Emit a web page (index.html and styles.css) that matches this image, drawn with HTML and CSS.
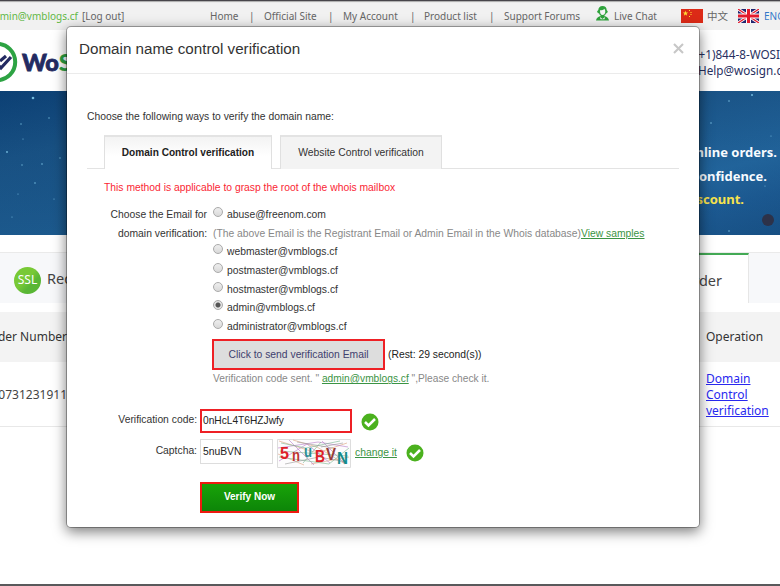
FILE: index.html
```html
<!DOCTYPE html>
<html lang="en">
<head>
<meta charset="utf-8">
<title>Domain name control verification</title>
<link rel="stylesheet" href="styles.css">
</head>
<body>
<div class="page">
  <div class="topbar">
    <div class="account"><span class="user">admin@vmblogs.cf</span> <span>[Log out]</span></div>
    <div class="nav">
      <span>Home</span><i>|</i><span>Official Site</span><i>|</i><span>My Account</span><i>|</i><span>Product list</span><i>|</i><span>Support Forums</span>
      <svg class="agent" width="13" height="15" viewBox="0 0 13 15"><path fill="#2fa33c" d="M6.500 0C3.800 0 2.400 1.700 2.300 4L1 5.500l1 1.800h1C3.500 8.800 4.200 9.500 5 9.900 2.300 10.500.4 11.500 0 14.500h13c-.4-3-2.300-4-5-4.600 1-.5 1.700-1.300 2-2.600h1l.8-1.700L10.700 4C10.600 1.500 9.200 0 6.500 0z"/><path fill="#f4f4f4" d="M4 4.200c2 0 3.500-.5 4.500-1.500L9.300 5c0 3-1.300 4-2.800 4S3.900 7.500 4 4.200zM4 11l2.500 2L9 11l-.5 2.300h-4z"/></svg>
      <span>Live Chat</span>
      <svg width="22" height="14" viewBox="0 0 22 14"><path fill="#dc2a17" d="M0 0h22v14H0z"/><path fill="#fd3" d="M4.500 1.800l.7 1.800h1.900L5.600 4.800l.6 1.900-1.700-1.100-1.700 1.100.6-1.900-1.500-1.200h1.900zM8 1h1v1H8zM9.500 3h1v1h-1zM9.500 5h1v1h-1zM8 7h1v1H8z"/></svg>
      <span class="cjk">中文</span>
      <svg width="21" height="14" viewBox="0 0 21 14"><path fill="#20246e" d="M0 0h21v14H0z"/><path stroke="#fff" stroke-width="3" d="M0 0l21 14M21 0L0 14"/><path stroke="#e31b2d" stroke-width="1.300" d="M0 0l21 14M21 0L0 14"/><path stroke="#fff" stroke-width="5" d="M10.500 0v14M0 7h21"/><path stroke="#e31b2d" stroke-width="3" d="M10.500 0v14M0 7h21"/></svg>
      <span class="lang">ENGLISH</span>
    </div>
  </div>
  <div class="brandbar">
    <svg class="mark" width="18" height="42" viewBox="0 0 18 42"><circle cx="-3" cy="21" r="18.200" fill="none" stroke="#2da343" stroke-width="4"/><path d="M-4 22l5 5L11 16M0 20l6-5" fill="none" stroke="#232a61" stroke-width="3.200"/></svg>
    <div class="brand">Wo<b>S</b></div>
    <div class="contact"><div>(+1)844-8-WOSIGN</div><div>Help@wosign.com</div></div>
  </div>
  <div class="banner">
    <svg class="stars" width="780" height="144" viewBox="0 0 780 144"><g fill="#73b9dc"><circle cx="33" cy="7" r="1.300"/><circle cx="21" cy="33" r=".7"/><circle cx="49" cy="27" r=".7"/><circle cx="7" cy="61" r=".9"/><circle cx="23" cy="48" r=".6"/><circle cx="22" cy="74" r=".7"/><circle cx="42" cy="73" r=".8"/><circle cx="60" cy="67" r=".7"/><circle cx="35" cy="92" r=".8"/><circle cx="18" cy="103" r=".6"/><circle cx="54" cy="108" r=".6"/><circle cx="12" cy="126" r=".6"/><circle cx="752" cy="4" r="1"/><circle cx="729" cy="10" r=".8"/><circle cx="711" cy="32" r=".8"/><circle cx="771" cy="45" r=".6"/><circle cx="721" cy="86" r=".8"/><circle cx="729" cy="140" r=".8"/><circle cx="765" cy="95" r=".6"/></g></svg>
    <div class="slogan"><div>online orders.</div><div>confidence.</div><div class="gold">discount.</div></div>
    <div class="dot"></div>
  </div>
  <div class="tabs">
    <div class="ssl"><span class="badge">SSL</span><span class="request">Request</span></div>
    <div class="order">Order</div>
  </div>
  <div class="thead"><span class="c1">Order Number</span><span class="c2">Operation</span></div>
  <div class="trow"><span class="c1">160731231911</span><a class="c2">Domain<br>Control<br>verification</a></div>
</div>

<div class="modal">
  <div class="mhead"><span class="title">Domain name control verification</span>
    <svg width="11" height="11" viewBox="0 0 11 11"><path d="M1 1l9 9M10 1l-9 9" stroke="#c7c7c7" stroke-width="2.100"/></svg></div>
  <div class="intro">Choose the following ways to verify the domain name:</div>
  <div class="mtabs"><div class="mt on">Domain Control verification</div><div class="mt off">Website Control verification</div></div>
  <div class="warn">This method is applicable to grasp the root of the whois mailbox</div>
  <div class="emails">
    <div class="label"><div>Choose the Email for</div><div>domain verification:</div></div>
    <div class="list">
      <div class="opt"><i></i>abuse@freenom.com</div>
      <div class="opt note">(The above Email is the Registrant Email or Admin Email in the Whois database)<a>View samples</a></div>
      <div class="opt"><i></i>webmaster@vmblogs.cf</div>
      <div class="opt"><i></i>postmaster@vmblogs.cf</div>
      <div class="opt"><i></i>hostmaster@vmblogs.cf</div>
      <div class="opt"><i class="sel"></i>admin@vmblogs.cf</div>
      <div class="opt"><i></i>administrator@vmblogs.cf</div>
    </div>
  </div>
  <div class="send"><div class="sendbtn">Click to send verification Email</div><span>(Rest: 29 second(s))</span></div>
  <div class="sent">Verification code sent. " <a>admin@vmblogs.cf</a> ",Please check it.</div>
  <div class="code"><div class="lab">Verification code:</div><div class="in red">0nHcL4T6HZJwfy</div>
    <svg class="ok" width="18" height="18" viewBox="0 0 18 18"><circle cx="9" cy="9" r="8.500" fill="#4bb11e"/><path d="M4 9l3.500 3.500L14 6" fill="none" stroke="#fff" stroke-width="2.500"/></svg></div>
  <div class="captcha"><div class="lab">Captcha:</div><div class="in small">5nuBVN</div>
    <svg class="cap" width="74" height="29" viewBox="0 0 74 29"><path fill="#fdfcfd" stroke="#ddd" d="M.5.500h73v28H.5z"/><g fill="none" stroke-width=".6"><path stroke="#dc9f7a" d="M2 2l38 12 30-10M1 15l26 11M16 1l24 7 28 17M34 25l38-7"/><path stroke="#b77bc9" d="M1 9l40-6 30 5M2 22l28-17 23 19M12 1l25 25M45 2l22 22"/><path stroke="#79b591" d="M4 4l25 5 34-7M2 18l50 7 20-16M26 24l18-21M3 12l68 5"/><path stroke="#999" d="M20 3l36 6M8 25l34-7 27 5M44 8l22-4"/></g><g class="glyphs"><text x="3" y="20" fill="#e02029" textLength="9" lengthAdjust="spacingAndGlyphs">5</text><text x="15" y="22" fill="#bd3430" textLength="8" lengthAdjust="spacingAndGlyphs">n</text><text x="27" y="18" fill="#2a8c94" textLength="8" lengthAdjust="spacingAndGlyphs">u</text><text x="38" y="23" fill="#dd2027" textLength="10" lengthAdjust="spacingAndGlyphs">B</text><text x="49" y="21" fill="#963d38" textLength="10" lengthAdjust="spacingAndGlyphs">V</text><text x="60" y="25" fill="#168b8b" textLength="11" lengthAdjust="spacingAndGlyphs">N</text></g></svg>
    <a>change it</a>
    <svg class="ok" width="18" height="18" viewBox="0 0 18 18"><circle cx="9" cy="9" r="8.500" fill="#4bb11e"/><path d="M4 9l3.500 3.500L14 6" fill="none" stroke="#fff" stroke-width="2.500"/></svg></div>
  <div class="verify">Verify Now</div>
</div>
</body>
</html>
```
FILE: styles.css
```css
* { box-sizing: border-box; }
body { margin: 0; width: 780px; height: 586px; overflow: hidden; position: relative; background: #fff; font-family: "Noto Sans", "Noto Sans CJK SC", sans-serif; white-space: nowrap; }
i { font-style: normal; }
svg { display: block; flex: none; }
.page { width: 780px; height: 586px; overflow: hidden; display: flex; flex-direction: column; border-top: 1px solid #47454a; border-bottom: 2px solid #59595b; }
.page > div { flex: none; }
.topbar { height: 29px; background: #f1f1f1; display: flex; align-items: center; color: #666; font-size: 10px; line-height: 28px; box-shadow: inset 0 2px 1px -1px #aaa; }
.account { width: 222px; flex: none; display: flex; gap: 4px; margin-left: -12px; }
.account span { flex: none; }
.user { color: #62b846; }
.nav { flex: none; display: grid; grid-template-columns: 39px 15px 64px 15px 67px 14px 65px 15px 92px 18px 67px 26px 31px 26px 60px; align-items: center; height: 29px; }
.agent { margin-top: -4px; }
.cjk { font-family: "Noto Sans CJK SC", sans-serif; font-size: 10.500px; }
.lang { color: #3479c9; }
.brandbar { height: 61px; display: flex; align-items: flex-start; }
.mark { margin-top: 11px; }
.brand { flex: none; width: 79px; margin: 16px 0 0 4px; font: 900 23.500px/32px Lato, sans-serif; color: #232a61; -webkit-text-stroke: .8px #232a61; }
.brand b { color: #2da343; font-weight: 900; -webkit-text-stroke: 0; }
.contact { flex: none; margin: 16px 0 0 594px; color: #27305f; font-size: 11.700px; line-height: 16px; }
.contact div:last-child { margin-left: 3px; }
.banner { height: 144px; position: relative; display: flex; justify-content: flex-end; background: linear-gradient(rgba(0,20,60,.12), rgba(0,20,60,0)), linear-gradient(165deg, #0e467c 0%, #1a5588 20%, #1c5a8e 50%, #2368a0 77%, #1c5a92 88%, #174f83 100%); }
.stars { position: absolute; left: 0; top: 0; }
.slogan { position: relative; width: 97px; padding-top: 50px; color: #f7fbff; font-weight: bold; font-size: 13px; line-height: 23.500px; }
.slogan div { width: 94px; text-align: right; }
.slogan div:nth-child(2) { width: 84px; }
.slogan .gold { width: 61px; color: #f7e34d; }
.dot { position: absolute; left: 762px; top: 123px; width: 12px; height: 12px; border-radius: 50%; background: #2d3249; }
.tabs { margin-top: 17px; height: 51px; display: flex; background: #f7f8fa; border-top: 1px solid #eaeaea; color: #444; font-size: 14.500px; line-height: 56px; }
.ssl { width: 600px; display: flex; align-items: center; gap: 6px; padding-left: 14px; }
.badge { width: 27px; height: 27px; margin-top: 5px; border-radius: 50%; background: linear-gradient(135deg, #78c936 45%, #59b635 65%); color: #fff; font-size: 12px; line-height: 25px; text-align: center; }
.order { width: 149px; padding-right: 26px; text-align: right; background: #fff; border-top: 2px solid #43aa55; border-right: 1px solid #e6e6e6; line-height: 51px; }
.thead { margin-top: 9px; height: 50px; padding-bottom: 1px; background: #f3f3f3; display: flex; align-items: center; color: #333; font-size: 12px; }
.trow { height: 65px; padding-top: 2px; border-bottom: 1px solid #e8e8e8; display: flex; align-items: center; color: #444; font-size: 12px; line-height: 16px; }
.c1 { width: 87px; margin-left: -20px; text-align: right; }
.c2 { margin-left: 639px; }
a { text-decoration: underline; }
a.c2 { color: #2929ef; }

.modal { position: absolute; left: 66px; top: 26px; width: 634px; height: 502px; background: #fff; border: 1px solid rgba(0,0,0,.3); border-radius: 5px; background-clip: padding-box; box-shadow: 0 4px 13px rgba(0,0,0,.5); font: 10.330px/18.600px "Liberation Sans", sans-serif; color: #333; }
.mhead { height: 47px; border-bottom: 1px solid #ebebeb; display: flex; justify-content: space-between; align-items: center; padding: 0 15px 3px 12px; }
.mhead svg { margin-top: -1px; }
.title { font-size: 15.200px; line-height: 20px; }
.intro { margin: 34px 0 0 20px; }
.mtabs { margin: 8px 20px 0; height: 35px; display: flex; gap: 8px; padding-left: 17px; background: linear-gradient(#e3e3e3, #e3e3e3) 0 33px / 100% 1px no-repeat; }
.mt { height: 34px; line-height: 32px; text-align: center; border: 1px solid #e0e0e0; border-top: 2px solid #e3e3e3; border-bottom: 0; }
.on { width: 168px; font-size: 10.100px; font-weight: bold; color: #222; background: linear-gradient(#f3f3f3, #fff 60%); }
.off { width: 162px; background: #f3f3f3; }
.warn { margin: 9px 0 0 37px; color: #fa2634; }
.emails { display: flex; margin-top: 9px; }
.label { width: 140px; text-align: right; }
.list { margin-left: 6px; }
.opt { height: 18.600px; display: flex; }
.opt i { width: 10px; height: 10px; margin: 1px 4px 0 0; border: 1px solid #aaa; border-radius: 50%; background: linear-gradient(#eee, #d9d9d9); }
.opt .sel { background: radial-gradient(circle, #555 2px, #e4e4e4 3px); }
.note, .sent { color: #888; }
.modal a { color: #3b9444; }
.send { display: flex; margin: 3px 0 0 145px; align-items: center; gap: 3px; color: #222; }
.sendbtn { width: 173px; height: 31px; border: 2px solid #ee2025; background: #ddd; color: #40406e; line-height: 27px; text-align: center; }
.sent { height: 19px; margin-left: 146px; line-height: 17px; font-size: 10.200px; }
.code, .captcha { display: flex; }
.code { margin-top: 20px; height: 30px; }
.lab { width: 130px; text-align: right; margin-right: 3px; line-height: 22px; }
.captcha .lab { line-height: 24px; }
.in { border: 1px solid #ddd; padding-left: 2px; color: #222; }
.red { width: 152px; height: 24px; line-height: 20px; border: 2px solid #ee2025; padding-left: 1px; font-size: 10.200px; }
.small { width: 73px; height: 25px; line-height: 23px; }
.ok { margin: 4px 0 0 9px; }
.cap { margin: 0 4px; }
.glyphs { font: bold 17px "Liberation Sans", sans-serif; }
.captcha a { line-height: 28px; }
.captcha .ok { margin-top: 5px; }
.verify { width: 99px; height: 31px; margin: 14px 0 0 133px; border: 2px solid #ee1a10; background: linear-gradient(#18a309, #0d8508); color: #fff; font-size: 10px; font-weight: bold; line-height: 26px; text-align: center; }
```
